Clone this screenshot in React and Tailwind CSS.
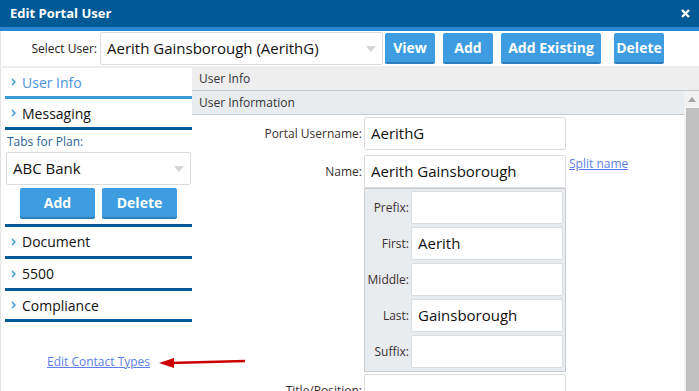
import React from "react";

const Chevron = () => (
  <svg width="5" height="8" viewBox="0 0 5 8" className="shrink-0">
    <polyline points="1,1 4,4 1,7" fill="none" stroke="#3a9ad9" strokeWidth="1.5" />
  </svg>
);

const Caret = () => (
  <svg width="10" height="6" viewBox="0 0 10 6" className="shrink-0">
    <polygon points="0,0 10,0 5,6" fill="#d6d6d6" />
  </svg>
);

function NavItem({ label, active, line, h = "h-[31px]" }) {
  return (
    <div className={`${h} shrink-0 flex items-center pl-[6px] gap-[6px] border-b-[3px] ${line}`}>
      <Chevron />
      <span className={`text-[14px] ${active ? "text-[#4c92dc]" : "text-[#111]"}`}>{label}</span>
    </div>
  );
}

function Btn({ children, w }) {
  return (
    <div
      className={`${w} h-[31px] bg-[#3d9de0] border-b-2 border-[#2a7fc0] rounded-[2px] flex items-center justify-center text-white font-bold text-[14px]`}
    >
      {children}
    </div>
  );
}

function Input({ value, w = "w-[202px]" }) {
  return (
    <div className={`${w} h-[33px] shrink-0 bg-white border border-[#dcdcdc] rounded-[2px] flex items-center px-[6px] text-[15px] text-[#111]`}>
      {value}
    </div>
  );
}

function Row({ label, children, extra }) {
  return (
    <div className="flex items-start">
      <div className="w-[170px] shrink-0 h-[33px] flex items-center justify-end text-[12px] text-[#3a3030] whitespace-nowrap">{label}</div>
      <div className="ml-[2px]">{children}</div>
      {extra}
    </div>
  );
}

function SubRow({ label, value }) {
  return (
    <div className="flex items-center">
      <div className="w-[44px] text-right text-[12px] text-[#3a3030]">{label}</div>
      <div className="ml-[2px]">
        <Input value={value} w="w-[152px]" />
      </div>
    </div>
  );
}

export default function App() {
  return (
    <div className="w-[699px] h-[391px] overflow-hidden bg-white font-['Open_Sans',sans-serif] flex flex-col">
      {/* Title bar */}
      <div className="h-[31px] shrink-0 bg-[#005a96] border-b-4 border-[#2b88d0] flex items-center justify-between pl-[10px] pr-[9px]">
        <span className="text-white font-bold text-[13px]">Edit Portal User</span>
        <svg width="9" height="9" viewBox="0 0 9 9">
          <path d="M1,1 L8,8 M8,1 L1,8" stroke="white" strokeWidth="2.4" />
        </svg>
      </div>

      {/* Toolbar */}
      <div className="h-[35px] shrink-0 flex items-start border-l border-[#e2e2e2]">
        <div className="w-[96px] h-[33px] mt-[1px] flex items-center justify-end text-[12px] text-[#222]">Select User:</div>
        <div className="ml-[3px] mt-[1px] w-[283px] h-[33px] border border-[#dcdcdc] rounded-[2px] flex items-center justify-between pl-[6px] pr-[6px]">
          <span className="text-[15px] text-[#111]">Aerith Gainsborough (AerithG)</span>
          <Caret />
        </div>
        <div className="ml-[2px] mt-[2px]"><Btn w="w-[50px]">View</Btn></div>
        <div className="ml-[8px] mt-[2px]"><Btn w="w-[50px]">Add</Btn></div>
        <div className="ml-[8px] mt-[2px]"><Btn w="w-[100px]">Add Existing</Btn></div>
        <div className="ml-[13px] mt-[2px]"><Btn w="w-[50px]">Delete</Btn></div>
      </div>
      <div className="h-[2px] shrink-0 bg-[#eeeeee]" />

      {/* Body */}
      <div className="flex-1 flex min-h-0 border-l border-[#e2e2e2]">
        {/* Left panel */}
        <div className="w-[191px] shrink-0 pl-[4px] flex flex-col">
          <NavItem label="User Info" active line="border-[#3a9ad9]" />
          <NavItem label="Messaging" line="border-[#005a96]" />
          <div className="pt-[3px] leading-[17px] text-[12px] text-[#2a6496] pl-[2px]">Tabs for Plan:</div>
          <div className="mt-[2px] ml-[1px] w-[185px] h-[33px] shrink-0 border border-[#dcdcdc] rounded-[2px] flex items-center justify-between pl-[6px] pr-[6px]">
            <span className="text-[15px] text-[#111]">ABC Bank</span>
            <Caret />
          </div>
          <div className="mt-[3px] pl-[15px] flex gap-[7px]">
            <Btn w="w-[75px]">Add</Btn>
            <Btn w="w-[75px]">Delete</Btn>
          </div>
          <div className="mt-[5px] h-[3px] shrink-0 bg-[#005a96]" />
          <NavItem label="Document" line="border-[#005a96]" h="h-[32px]" />
          <NavItem label="5500" line="border-[#005a96]" h="h-[32px]" />
          <NavItem label="Compliance" line="border-[#005a96]" h="h-[31px]" />
          <div className="mt-[32px] pl-[42px] flex items-center w-max">
            <span className="text-[12px] leading-[16px] text-[#5a7fe6] underline whitespace-nowrap">Edit Contact Types</span>
            <svg width="90" height="14" viewBox="0 0 90 14" className="ml-[8px] shrink-0">
              <line x1="12" y1="8" x2="87" y2="6" stroke="#cc0000" strokeWidth="2.5" />
              <polygon points="1,8 16,3 16,13" fill="#cc0000" />
            </svg>
          </div>
        </div>

        {/* Right panel */}
        <div className="flex-1 flex flex-col min-w-0">
          <div className="h-[23px] shrink-0 bg-[#eeeeee] border-b border-[#c9cdd3] flex items-center px-[7px] text-[12px] text-[#333]">
            User Info
          </div>
          <div className="flex-1 flex min-h-0">
            <div className="flex-1 flex flex-col">
              <div className="h-[24px] shrink-0 bg-[#e9ecef] border-b border-[#c9cdd3] flex items-center px-[7px] text-[12px] text-[#333]">
                User Information
              </div>
              <div className="mt-[2px] flex flex-col">
                <Row label="Portal Username:">
                  <Input value="AerithG" />
                </Row>
                <div className="mt-[5px]">
                  <Row
                    label="Name:"
                    extra={
                      <span className="ml-[3px] mt-[1px] text-[12px] leading-[16px] text-[#5a7fe6] underline whitespace-nowrap">Split name</span>
                    }
                  >
                    <Input value="Aerith Gainsborough" />
                  </Row>
                </div>
                <div className="ml-[172px] w-[202px] shrink-0 bg-[#e9ecef] border border-[#c8ccd2] pt-[2px] pb-[3px] flex flex-col gap-[3px]">
                  <SubRow label="Prefix:" value="" />
                  <SubRow label="First:" value="Aerith" />
                  <SubRow label="Middle:" value="" />
                  <SubRow label="Last:" value="Gainsborough" />
                  <SubRow label="Suffix:" value="" />
                </div>
                <div className="mt-[2px]">
                  <Row label="Title/Position:">
                    <Input value="" />
                  </Row>
                </div>
              </div>
            </div>
            {/* Scrollbar */}
            <div className="w-[15px] shrink-0 flex flex-col bg-[#f1f1f1]">
              <div className="h-[17px] shrink-0 flex items-center justify-center">
                <svg width="8" height="5" viewBox="0 0 8 5">
                  <polygon points="0,5 8,5 4,0" fill="#a3a3a3" />
                </svg>
              </div>
              <div className="flex-1 ml-[2px] bg-[#c1c1c1]" />
            </div>
          </div>
        </div>
      </div>
    </div>
  );
}
